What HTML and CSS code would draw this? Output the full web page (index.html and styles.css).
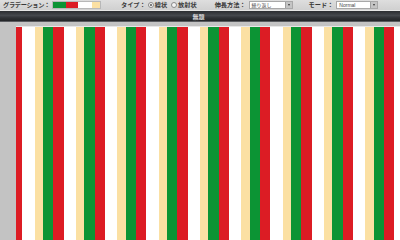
FILE: index.html
```html
<!DOCTYPE html>
<html lang="ja">
<head>
<meta charset="utf-8">
<link rel="stylesheet" href="styles.css">
</head>
<body>
<div class="app">
  <div class="toolbar">
    <span class="label l-grad">グラデーション：</span>
    <span class="swatch"><i class="sw-g"></i><i class="sw-r"></i><i class="sw-w"></i><i class="sw-c"></i></span>
    <span class="label l-type">タイプ：</span>
    <span class="radio on"></span><span class="label opt">線状</span>
    <span class="radio r2"></span><span class="label opt">放射状</span>
    <span class="label l-ext">伸長方法：</span>
    <span class="select s-ext"><span class="val">繰り返し</span><span class="arrow"></span></span>
    <span class="label l-mode">モード：</span>
    <span class="select s-mode"><span class="val">Normal</span><span class="arrow"></span></span>
  </div>
  <div class="titlebar"><span class="title">無題</span></div>
  <div class="workspace">
    <div class="canvas"></div>
  </div>
</div>
</body>
</html>
```
FILE: styles.css
```css
* { box-sizing: border-box; }
html, body { margin: 0; padding: 0; }
body { width: 400px; height: 240px; overflow: hidden; background: #c3c3c3; }
.app { display: flex; flex-direction: column; width: 400px; height: 240px; }

.toolbar {
  height: 11px;
  display: flex;
  align-items: center;
  background: linear-gradient(#dedede, #d0d0d0);
  border-bottom: 1px solid #e6e6e6;
  font-family: "Noto Sans CJK JP", "Noto Sans", sans-serif;
  font-size: 6.2px;
  font-weight: 700;
  color: #3a3a3a;
  white-space: nowrap;
}
.label { line-height: 8px; }
.l-grad { margin-left: 3px; letter-spacing: -0.3px; }
.swatch {
  margin-left: 2px;
  display: flex;
  width: 49px;
  height: 8px;
  border: 1px solid #b8b8b8;
}
.swatch i { display: block; height: 100%; }
.sw-g { width: 13px; background: #0c9434; }
.sw-r { width: 12px; background: #dc1c24; }
.sw-w { width: 14px; background: #ffffff; }
.sw-c { flex: 1; background: #fbe0a3; }

.l-type { margin-left: 20px; }
.radio {
  width: 6px; height: 6px;
  border-radius: 50%;
  border: 1px solid #8a8a8a;
  background: #f4f4f4;
  margin-left: 2px;
  margin-right: 1px;
  display: flex; align-items: center; justify-content: center;
}
.radio.on::after {
  content: "";
  width: 2px; height: 2px; border-radius: 50%;
  background: #555;
}
.r2 { margin-left: 4px; }
.opt { font-weight: 700; }

.l-ext { margin-left: 18px; }
.select {
  display: flex;
  align-items: center;
  height: 8px;
  background: #fff;
  border: 1px solid #a8a8a8;
  margin-left: 3px;
  font-weight: 400;
  font-size: 5px;
  color: #444;
}
.s-ext { width: 44px; }
.s-mode { width: 42px; }
.val { flex: 1; padding-left: 2px; line-height: 6px; font-family: "Liberation Sans", "Noto Sans CJK JP", sans-serif; }
.arrow {
  width: 7px; height: 100%;
  background: #c4c4c4;
  border-left: 1px solid #a0a0a0;
  position: relative;
}
.arrow::after {
  content: "";
  position: absolute;
  left: 2px; top: 2px;
  border-left: 1.5px solid transparent;
  border-right: 1.5px solid transparent;
  border-top: 2px solid #333;
}
.l-mode { margin-left: 16px; }

.titlebar {
  height: 11px;
  background: linear-gradient(#2b2d31, #44474c 45%, #2e3034 70%, #232528);
  border-bottom: 1px solid #5a5c60;
  display: flex;
  align-items: center;
  justify-content: center;
}
.title {
  font-family: "Noto Sans CJK JP", sans-serif;
  font-size: 6px;
  font-weight: 700;
  color: #d8d8d8;
  line-height: 7px;
  margin-left: -3px;
}

.workspace {
  flex: 1;
  background: #c3c3c3;
  padding: 4px 0 0 16px;
  display: flex;
}
.canvas {
  flex: 1;
  border-top: 1px solid #e8e8e8;
  background: repeating-linear-gradient(90deg,
    #dc1c24 0 6.33px,
    #ffffff 6.33px 18.67px,
    #fbe0a3 18.67px 27px,
    #0c9434 27px 37.33px,
    #dc1c24 37.33px 41.33px);
}
```
